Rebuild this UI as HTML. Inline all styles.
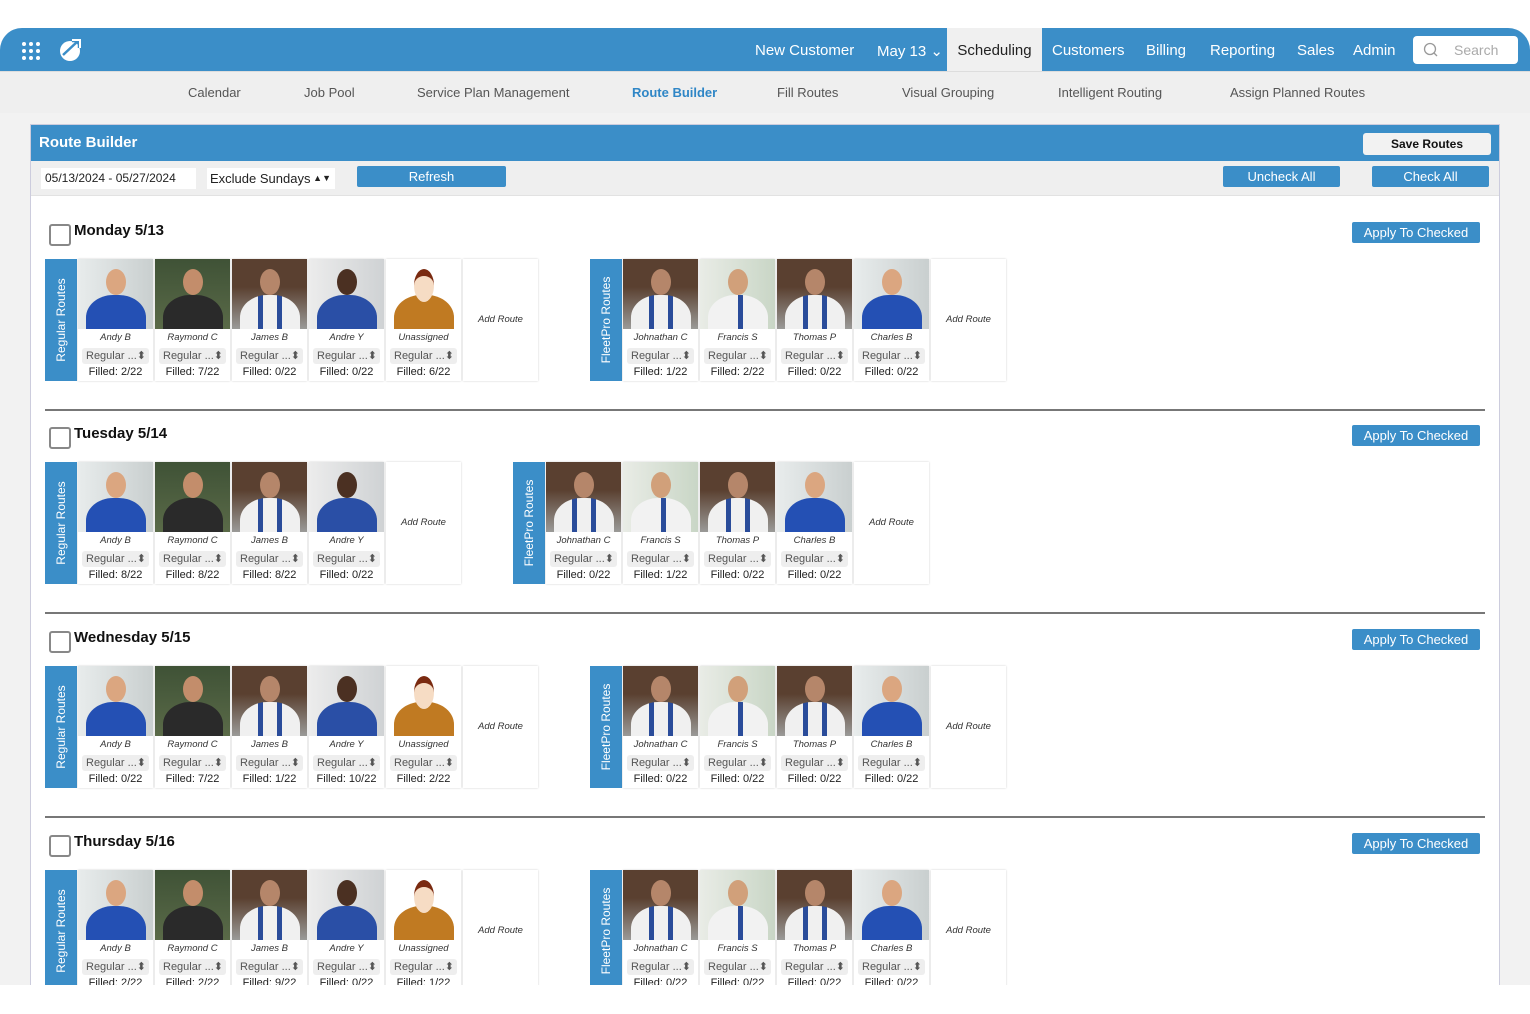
<!DOCTYPE html><html><head><meta charset="utf-8"><style>
*{box-sizing:border-box;margin:0;padding:0}
body{width:1530px;height:1014px;background:#fff;font-family:"Liberation Sans",sans-serif;position:relative;overflow:hidden}
#fr{position:absolute;left:0;top:28px;width:1530px;height:957px;background:#f2f2f2;border-radius:22px 22px 0 0;overflow:hidden}
#top{position:absolute;left:0;top:0;width:1530px;height:43px;background:#3b8ec8}
#top .n{position:absolute;top:14px;color:#fff;font-size:15px}
#sched{position:absolute;left:947px;top:0;width:95px;height:43px;background:#f0f0f0;color:#222;font-size:15px;text-align:center;line-height:46px}
#srch{position:absolute;left:1413px;top:8px;width:105px;height:28px;background:#fff;border-radius:4px;color:#aaa;font-size:14px;line-height:28px;padding-left:41px}
#sub{position:absolute;left:0;top:43px;width:1530px;height:42px;background:#efefef;border-top:1px solid #ddd}
#sub span{position:absolute;top:13px;font-size:13px;color:#555}
#panel{position:absolute;left:30px;top:96px;width:1470px;height:900px;background:#fff;border:1px solid #ccd}
#ph{height:36px;background:#3b8ec8;color:#fff;font-weight:bold;font-size:15px;padding:9px 8px}
#tb{height:35px;background:#efefef;border-bottom:1px solid #e2e2e2;position:relative}
.btn{position:absolute;background:#3b8ec8;color:#fff;font-size:13px;text-align:center;border-radius:2px;height:21px;line-height:21px}
.sec{position:absolute;left:0;width:1470px;height:190px}
.cb{position:absolute;left:18px;top:-7px;width:22px;height:22px;border:2px solid #888;border-radius:3px;background:#fff}
.day{position:absolute;left:43px;top:-9px;font-size:15px;font-weight:bold;color:#111}
.hr{position:absolute;left:14px;top:178px;width:1440px;height:2px;background:#777}
.grp{position:absolute;top:28px;height:122px;display:flex}
.lab{width:32px;height:122px;background:#3b8ec8;margin-right:1px;position:relative}
.lab span{position:absolute;left:50%;top:50%;transform:translate(-50%,-50%) rotate(-90deg);color:#fff;font-size:12px;white-space:nowrap}
.card{width:75px;height:122px;background:#fff;margin-right:2px;box-shadow:0 0 2px rgba(0,0,0,.2);text-align:center;position:relative}
.card .nm{font-size:9.5px;font-style:italic;color:#333;margin-top:3px;height:12px}
.card .sl{margin:4px 4px 0;height:16px;background:#eee;border-radius:3px;font-size:11px;color:#555;line-height:16px;text-align:left;padding-left:4px}
.card .fl{font-size:11px;color:#222;margin-top:2px}
.add{font-size:9.5px;font-style:italic;color:#333;line-height:122px}
.p{height:70px;position:relative;overflow:hidden}
.p::before{content:"";position:absolute;left:28px;top:10px;width:20px;height:26px;border-radius:50%;background:var(--h);z-index:2}
.p::after{content:"";position:absolute;left:8px;top:36px;width:60px;height:50px;border-radius:45% 45% 0 0;background:var(--b)}
.a{background:linear-gradient(90deg,#e8ecec,#c9cfcf);--h:#dba680;--b:#2450b4}
.r{background:linear-gradient(#3f5236,#5a6a48);--h:#c38d6b;--b:#2a2a2a}
.j{background:linear-gradient(#5a4030 40%,#9a9a98);--h:#b5866a;--b:linear-gradient(90deg,#f0f0f0 30%,#2a4c9a 30% 38%,#f0f0f0 38% 62%,#2a4c9a 62% 70%,#f0f0f0 70%)}
.y{background:linear-gradient(90deg,#ececec,#cfd2d4);--h:#4b3022;--b:#2a4fa6}
.u{background:#fff;--h:#f6dcc4;--b:#c07a22}
.u::before{border-top:7px solid #7a2a10}
.f{background:linear-gradient(90deg,#e9ece6,#c9d6c6);--h:#d1a07a;--b:linear-gradient(90deg,#f2f2f2 50%,#2a4c9a 50% 58%,#f2f2f2 58%)}
</style></head><body>
<div id="fr">
<div id="top">
<svg style="position:absolute;left:21px;top:13px" width="20" height="19"><g fill="#fff"><circle cx="3" cy="3" r="2"/><circle cx="10" cy="3" r="2"/><circle cx="17" cy="3" r="2"/><circle cx="3" cy="10" r="2"/><circle cx="10" cy="10" r="2"/><circle cx="17" cy="10" r="2"/><circle cx="3" cy="17" r="2"/><circle cx="10" cy="17" r="2"/><circle cx="17" cy="17" r="2"/></g></svg>
<svg style="position:absolute;left:58px;top:9px" width="26" height="26" viewBox="0 0 26 26"><circle cx="12" cy="14" r="10" fill="#fff"/><path d="M5 18 L20 4 M14 4 H21 V11" stroke="#3b8ec8" stroke-width="2.5" fill="none"/><path d="M14 3h8v8" stroke="#fff" stroke-width="2" fill="none"/></svg>
<span class="n" style="left:755px">New Customer</span>
<span class="n" style="left:877px">May 13 ⌄</span>
<div id="sched">Scheduling</div>
<span class="n" style="left:1052px">Customers</span>
<span class="n" style="left:1146px">Billing</span>
<span class="n" style="left:1210px">Reporting</span>
<span class="n" style="left:1297px">Sales</span>
<span class="n" style="left:1353px">Admin</span>
<div id="srch"><svg style="position:absolute;left:10px;top:6px" width="16" height="16"><circle cx="7" cy="7" r="5.5" stroke="#999" stroke-width="1.3" fill="none"/><path d="M11 11l3 3" stroke="#999" stroke-width="1.3"/></svg>Search</div>
</div>
<div id="sub">
<span style="left:188px">Calendar</span><span style="left:304px">Job Pool</span><span style="left:417px">Service Plan Management</span><span style="left:632px;color:#2f86c6;font-weight:bold">Route Builder</span><span style="left:777px">Fill Routes</span><span style="left:902px">Visual Grouping</span><span style="left:1058px">Intelligent Routing</span><span style="left:1230px">Assign Planned Routes</span>
</div>
<div id="panel">
<div id="ph">Route Builder<div style="position:absolute;left:1332px;top:8px;width:128px;height:22px;background:#f2f2f2;border-radius:3px;color:#111;font-size:12px;text-align:center;line-height:22px">Save Routes</div></div>
<div id="tb">
<div style="position:absolute;left:10px;top:7px;width:155px;height:21px;background:#fff;font-size:12px;line-height:21px;padding-left:4px;color:#222">05/13/2024 - 05/27/2024</div>
<div style="position:absolute;left:176px;top:7px;width:128px;height:21px;background:#fff;font-size:13px;line-height:21px;padding-left:3px;color:#222">Exclude Sundays <span style="float:right;margin-right:4px;font-size:9px">▲▼</span></div>
<div class="btn" style="left:326px;top:5px;width:149px">Refresh</div>
<div class="btn" style="left:1192px;top:5px;width:117px">Uncheck All</div>
<div class="btn" style="left:1341px;top:5px;width:117px">Check All</div>
</div>

<div class="sec" style="top:106px">
<div class="cb"></div><div class="day">Monday 5/13</div><div class="btn" style="left:1321px;top:-9px;width:128px">Apply To Checked</div>
<div class="grp" style="left:14px"><div class="lab"><span>Regular Routes</span></div>
<div class="card"><div class="p a"></div><div class="nm">Andy B</div><div class="sl">Regular ...⬍</div><div class="fl">Filled: 2/22</div></div>
<div class="card"><div class="p r"></div><div class="nm">Raymond C</div><div class="sl">Regular ...⬍</div><div class="fl">Filled: 7/22</div></div>
<div class="card"><div class="p j"></div><div class="nm">James B</div><div class="sl">Regular ...⬍</div><div class="fl">Filled: 0/22</div></div>
<div class="card"><div class="p y"></div><div class="nm">Andre Y</div><div class="sl">Regular ...⬍</div><div class="fl">Filled: 0/22</div></div>
<div class="card"><div class="p u"></div><div class="nm">Unassigned</div><div class="sl">Regular ...⬍</div><div class="fl">Filled: 6/22</div></div>
<div class="card add">Add Route</div></div>
<div class="grp" style="left:559px"><div class="lab"><span>FleetPro Routes</span></div>
<div class="card"><div class="p j"></div><div class="nm">Johnathan C</div><div class="sl">Regular ...⬍</div><div class="fl">Filled: 1/22</div></div>
<div class="card"><div class="p f"></div><div class="nm">Francis S</div><div class="sl">Regular ...⬍</div><div class="fl">Filled: 2/22</div></div>
<div class="card"><div class="p j"></div><div class="nm">Thomas P</div><div class="sl">Regular ...⬍</div><div class="fl">Filled: 0/22</div></div>
<div class="card"><div class="p a"></div><div class="nm">Charles B</div><div class="sl">Regular ...⬍</div><div class="fl">Filled: 0/22</div></div>
<div class="card add">Add Route</div></div>
<div class="hr"></div></div>

<div class="sec" style="top:309px">
<div class="cb"></div><div class="day">Tuesday 5/14</div><div class="btn" style="left:1321px;top:-9px;width:128px">Apply To Checked</div>
<div class="grp" style="left:14px"><div class="lab"><span>Regular Routes</span></div>
<div class="card"><div class="p a"></div><div class="nm">Andy B</div><div class="sl">Regular ...⬍</div><div class="fl">Filled: 8/22</div></div>
<div class="card"><div class="p r"></div><div class="nm">Raymond C</div><div class="sl">Regular ...⬍</div><div class="fl">Filled: 8/22</div></div>
<div class="card"><div class="p j"></div><div class="nm">James B</div><div class="sl">Regular ...⬍</div><div class="fl">Filled: 8/22</div></div>
<div class="card"><div class="p y"></div><div class="nm">Andre Y</div><div class="sl">Regular ...⬍</div><div class="fl">Filled: 0/22</div></div>
<div class="card add">Add Route</div></div>
<div class="grp" style="left:482px"><div class="lab"><span>FleetPro Routes</span></div>
<div class="card"><div class="p j"></div><div class="nm">Johnathan C</div><div class="sl">Regular ...⬍</div><div class="fl">Filled: 0/22</div></div>
<div class="card"><div class="p f"></div><div class="nm">Francis S</div><div class="sl">Regular ...⬍</div><div class="fl">Filled: 1/22</div></div>
<div class="card"><div class="p j"></div><div class="nm">Thomas P</div><div class="sl">Regular ...⬍</div><div class="fl">Filled: 0/22</div></div>
<div class="card"><div class="p a"></div><div class="nm">Charles B</div><div class="sl">Regular ...⬍</div><div class="fl">Filled: 0/22</div></div>
<div class="card add">Add Route</div></div>
<div class="hr"></div></div>

<div class="sec" style="top:513px">
<div class="cb"></div><div class="day">Wednesday 5/15</div><div class="btn" style="left:1321px;top:-9px;width:128px">Apply To Checked</div>
<div class="grp" style="left:14px"><div class="lab"><span>Regular Routes</span></div>
<div class="card"><div class="p a"></div><div class="nm">Andy B</div><div class="sl">Regular ...⬍</div><div class="fl">Filled: 0/22</div></div>
<div class="card"><div class="p r"></div><div class="nm">Raymond C</div><div class="sl">Regular ...⬍</div><div class="fl">Filled: 7/22</div></div>
<div class="card"><div class="p j"></div><div class="nm">James B</div><div class="sl">Regular ...⬍</div><div class="fl">Filled: 1/22</div></div>
<div class="card"><div class="p y"></div><div class="nm">Andre Y</div><div class="sl">Regular ...⬍</div><div class="fl">Filled: 10/22</div></div>
<div class="card"><div class="p u"></div><div class="nm">Unassigned</div><div class="sl">Regular ...⬍</div><div class="fl">Filled: 2/22</div></div>
<div class="card add">Add Route</div></div>
<div class="grp" style="left:559px"><div class="lab"><span>FleetPro Routes</span></div>
<div class="card"><div class="p j"></div><div class="nm">Johnathan C</div><div class="sl">Regular ...⬍</div><div class="fl">Filled: 0/22</div></div>
<div class="card"><div class="p f"></div><div class="nm">Francis S</div><div class="sl">Regular ...⬍</div><div class="fl">Filled: 0/22</div></div>
<div class="card"><div class="p j"></div><div class="nm">Thomas P</div><div class="sl">Regular ...⬍</div><div class="fl">Filled: 0/22</div></div>
<div class="card"><div class="p a"></div><div class="nm">Charles B</div><div class="sl">Regular ...⬍</div><div class="fl">Filled: 0/22</div></div>
<div class="card add">Add Route</div></div>
<div class="hr"></div></div>

<div class="sec" style="top:717px">
<div class="cb"></div><div class="day">Thursday 5/16</div><div class="btn" style="left:1321px;top:-9px;width:128px">Apply To Checked</div>
<div class="grp" style="left:14px"><div class="lab"><span>Regular Routes</span></div>
<div class="card"><div class="p a"></div><div class="nm">Andy B</div><div class="sl">Regular ...⬍</div><div class="fl">Filled: 2/22</div></div>
<div class="card"><div class="p r"></div><div class="nm">Raymond C</div><div class="sl">Regular ...⬍</div><div class="fl">Filled: 2/22</div></div>
<div class="card"><div class="p j"></div><div class="nm">James B</div><div class="sl">Regular ...⬍</div><div class="fl">Filled: 9/22</div></div>
<div class="card"><div class="p y"></div><div class="nm">Andre Y</div><div class="sl">Regular ...⬍</div><div class="fl">Filled: 0/22</div></div>
<div class="card"><div class="p u"></div><div class="nm">Unassigned</div><div class="sl">Regular ...⬍</div><div class="fl">Filled: 1/22</div></div>
<div class="card add">Add Route</div></div>
<div class="grp" style="left:559px"><div class="lab"><span>FleetPro Routes</span></div>
<div class="card"><div class="p j"></div><div class="nm">Johnathan C</div><div class="sl">Regular ...⬍</div><div class="fl">Filled: 0/22</div></div>
<div class="card"><div class="p f"></div><div class="nm">Francis S</div><div class="sl">Regular ...⬍</div><div class="fl">Filled: 0/22</div></div>
<div class="card"><div class="p j"></div><div class="nm">Thomas P</div><div class="sl">Regular ...⬍</div><div class="fl">Filled: 0/22</div></div>
<div class="card"><div class="p a"></div><div class="nm">Charles B</div><div class="sl">Regular ...⬍</div><div class="fl">Filled: 0/22</div></div>
<div class="card add">Add Route</div></div>
</div>
</div>
</div>
</body></html>
